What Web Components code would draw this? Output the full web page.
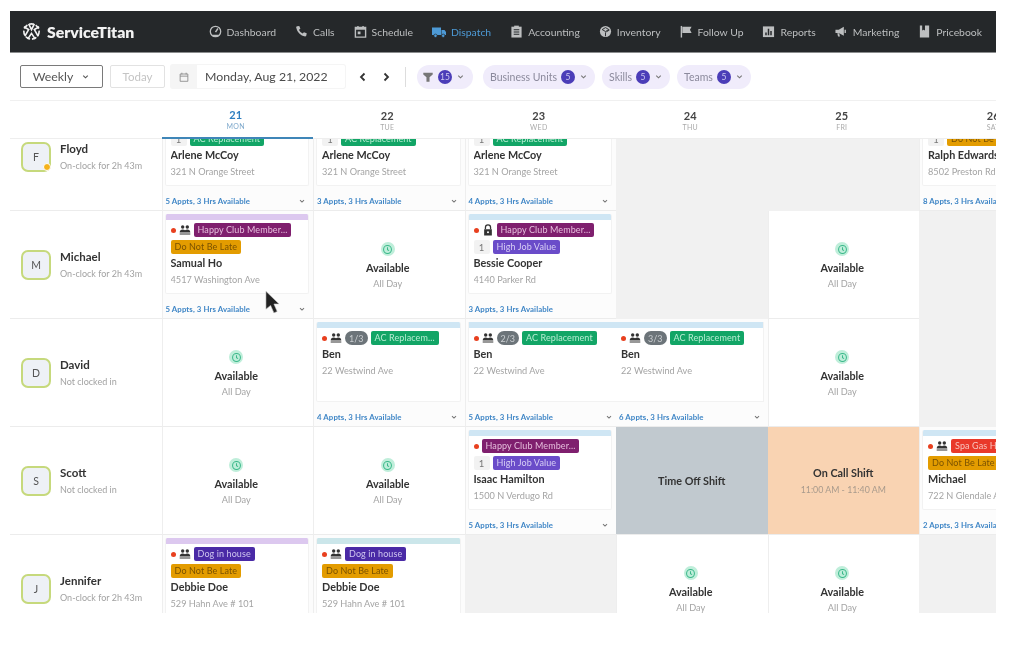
<!DOCTYPE html>
<html>
<head>
<meta charset="utf-8">
<title>ServiceTitan Dispatch</title>
<style>
    html, body { margin: 0; padding: 0; background: #fff; }
    body { font-family: 'Lato', 'Liberation Sans', sans-serif; }
</style>
</head>
<body>
<st-app>
    <st-topbar></st-topbar>
    <st-toolbar></st-toolbar>
    <st-board>
        <st-corner></st-corner>
        <st-day num="21" label="MON" active></st-day>
        <st-day num="22" label="TUE"></st-day>
        <st-day num="23" label="WED"></st-day>
        <st-day num="24" label="THU"></st-day>
        <st-day num="25" label="FRI"></st-day>
        <st-day num="26" label="SAT"></st-day>

        <st-tech initial="F" name="Floyd" status="On-clock for 2h 43m" alert></st-tech>
        <st-slot summary="5 Appts, 3 Hrs Available" active><st-job name="Arlene McCoy" addr="321 N Orange Street"><st-marks slot="one"></st-marks><st-count slot="two">1</st-count><st-tag slot="two" color="green">AC Replacement</st-tag></st-job></st-slot>
        <st-slot summary="3 Appts, 3 Hrs Available"><st-job name="Arlene McCoy" addr="321 N Orange Street"><st-marks slot="one"></st-marks><st-count slot="two">1</st-count><st-tag slot="two" color="green">AC Replacement</st-tag></st-job></st-slot>
        <st-slot summary="4 Appts, 3 Hrs Available"><st-job name="Arlene McCoy" addr="321 N Orange Street"><st-marks slot="one"></st-marks><st-count slot="two">1</st-count><st-tag slot="two" color="green">AC Replacement</st-tag></st-job></st-slot>
        <st-off></st-off>
        <st-off></st-off>
        <st-slot summary="8 Appts, 3 Hrs Available"><st-job name="Ralph Edwards" addr="8502 Preston Rd"><st-marks slot="one"></st-marks><st-count slot="two">1</st-count><st-tag slot="two" color="amber">Do Not Be Late</st-tag></st-job></st-slot>

        <st-tech initial="M" name="Michael" status="On-clock for 2h 43m"></st-tech>
        <st-slot summary="5 Appts, 3 Hrs Available"><st-job strip="#dcc8ef" name="Samual Ho" addr="4517 Washington Ave"><st-marks slot="one" icon="people"></st-marks><st-tag slot="one" color="plum">Happy Club Member...</st-tag><st-tag slot="two" color="amber">Do Not Be Late</st-tag></st-job></st-slot>
        <st-free></st-free>
        <st-slot summary="3 Appts, 3 Hrs Available" plain><st-job name="Bessie Cooper" addr="4140 Parker Rd"><st-marks slot="one" icon="lock"></st-marks><st-tag slot="one" color="plum">Happy Club Member...</st-tag><st-count slot="two">1</st-count><st-tag slot="two" color="violet">High Job Value</st-tag></st-job></st-slot>
        <st-off></st-off>
        <st-free></st-free>
        <st-off></st-off>

        <st-tech initial="D" name="David" status="Not clocked in"></st-tech>
        <st-free></st-free>
        <st-slot summary="4 Appts, 3 Hrs Available"><st-job name="Ben" addr="22 Westwind Ave"><st-marks slot="one" icon="people"></st-marks><st-count slot="one" round>1/3</st-count><st-tag slot="one" color="green">AC Replacem...</st-tag></st-job></st-slot>
        <st-slot summary="5 Appts, 3 Hrs Available" join="left"><st-job name="Ben" addr="22 Westwind Ave"><st-marks slot="one" icon="people"></st-marks><st-count slot="one" round>2/3</st-count><st-tag slot="one" color="green">AC Replacement</st-tag></st-job></st-slot>
        <st-slot summary="6 Appts, 3 Hrs Available" join="right"><st-job name="Ben" addr="22 Westwind Ave"><st-marks slot="one" icon="people"></st-marks><st-count slot="one" round>3/3</st-count><st-tag slot="one" color="green">AC Replacement</st-tag></st-job></st-slot>
        <st-free></st-free>
        <st-off></st-off>

        <st-tech initial="S" name="Scott" status="Not clocked in"></st-tech>
        <st-free></st-free>
        <st-free></st-free>
        <st-slot summary="5 Appts, 3 Hrs Available"><st-job name="Isaac Hamilton" addr="1500 N Verdugo Rd"><st-marks slot="one"></st-marks><st-tag slot="one" color="plum">Happy Club Member...</st-tag><st-count slot="two">1</st-count><st-tag slot="two" color="violet">High Job Value</st-tag></st-job></st-slot>
        <st-shift title="Time Off Shift" color="#c1c9cf"></st-shift>
        <st-shift title="On Call Shift" time="11:00 AM - 11:40 AM" color="#f9d3b2"></st-shift>
        <st-slot summary="2 Appts, 3 Hrs Available"><st-job name="Michael" addr="722 N Glendale Ave"><st-marks slot="one" icon="people"></st-marks><st-tag slot="one" color="red">Spa Gas Heater</st-tag><st-tag slot="two" color="amber">Do Not Be Late</st-tag></st-job></st-slot>

        <st-tech initial="J" name="Jennifer" status="On-clock for 2h 43m"></st-tech>
        <st-slot summary=""><st-job strip="#dcc8ef" name="Debbie Doe" addr="529 Hahn Ave # 101"><st-marks slot="one" icon="people"></st-marks><st-tag slot="one" color="indigo">Dog in house</st-tag><st-tag slot="two" color="amber">Do Not Be Late</st-tag></st-job></st-slot>
        <st-slot summary=""><st-job strip="#cbe6ea" name="Debbie Doe" addr="529 Hahn Ave # 101"><st-marks slot="one" icon="people"></st-marks><st-tag slot="one" color="indigo">Dog in house</st-tag><st-tag slot="two" color="amber">Do Not Be Late</st-tag></st-job></st-slot>
        <st-off></st-off>
        <st-free></st-free>
        <st-free></st-free>
        <st-off></st-off>
    </st-board>
    <st-pointer></st-pointer>
</st-app>

<script>
const ICONS = {
    dashboard: '<circle cx="7" cy="7" r="5.6" fill="none" stroke="currentColor" stroke-width="1.4"/><path d="M7 7.6 9.6 3.8 M3.6 11.2h6.8" fill="none" stroke="currentColor" stroke-width="1.6"/>',
    calls: '<path d="M2.2 1.4 4.6 1l1.2 3-1.5 1.2c.7 1.8 2.2 3.3 4 4l1.3-1.5 3 1.2-.4 2.5c-.1.6-.7 1-1.3.9C5.900 11.500 2.500 8.100 1.300 2.700c-.1-.6.300-1.200.9-1.300z" fill="currentColor"/>',
    schedule: '<path d="M1.500 2.500h11v10.500h-11z" fill="none" stroke="currentColor" stroke-width="1.500"/><path d="M1.500 2.500h11v2.500h-11zM3.500 1h1.500v2h-1.500zM9 1h1.500v2h-1.500zM4 7h3v3h-3z" fill="currentColor"/>',
    dispatch: '<path d="M0 2.500h9v7.500h-9zM9.500 5h3l2 2.500v2.500h-5z" fill="currentColor"/><circle cx="3.500" cy="10.800" r="1.700" fill="currentColor" stroke="#25282a" stroke-width=".7"/><circle cx="11.200" cy="10.800" r="1.700" fill="currentColor" stroke="#25282a" stroke-width=".7"/>',
    accounting: '<path d="M1.500 1.800h11v11.700h-11z" fill="currentColor"/><path d="M4.500.700h5v2.300h-5z" fill="currentColor"/><path d="M4 5h6M4 7.500h6M4 10h6" stroke="#25282a" stroke-width="1.100"/>',
    inventory: '<circle cx="7" cy="7" r="6" fill="currentColor"/><path d="M7 2.800 10.600 4.900 7 7 3.400 4.900zM7 7.900v4.200M7.900 7.400l3.400-2" fill="none" stroke="#25282a" stroke-width="1"/>',
    flag: '<path d="M1.500 1v12.500" stroke="currentColor" stroke-width="1.500"/><path d="M2.500 2h10l-1.800 3 1.800 3.500h-10z" fill="currentColor"/>',
    reports: '<path d="M1 1.500h12v11.500h-12z" fill="currentColor"/><path d="M3.500 11h1.600V8h-1.600zM6.200 11h1.600V4h-1.600zM8.900 11h1.600V6.500H8.900z" fill="#25282a"/>',
    marketing: '<path d="M.500 5h3.500l5.500-3v9.500l-5.500-3h-3.500z" fill="currentColor"/><path d="M2.500 9h2l.800 3.500h-2z" fill="currentColor"/><path d="M11 5v3.500" stroke="currentColor" stroke-width="1.500"/>',
    pricebook: '<path d="M2 .500h2.500v5.500l1.500-1 1.500 1V.500h4.500v13h-10z" fill="currentColor"/>',
    people: '<circle cx="4.300" cy="3.500" r="2" fill="currentColor"/><circle cx="9.700" cy="3.500" r="2" fill="currentColor"/><path d="M.800 10c0-2.300 1.400-3.700 3.500-3.700 1.100 0 2 .4 2.700 1.100.7-.7 1.600-1.100 2.700-1.100 2.100 0 3.500 1.400 3.500 3.700zM.800 11h12.400v1.300H.800z" fill="currentColor"/>',
    lock: '<path d="M4 6V4a3 3 0 0 1 6 0v2" fill="none" stroke="currentColor" stroke-width="1.500"/><path d="M2.500 6h9v7.500h-9z" fill="currentColor"/><circle cx="7" cy="9.600" r="1.200" fill="#fff"/>',
    chevron: '<path d="M3.500 5.500 7 9l3.500-3.500" fill="none" stroke="currentColor" stroke-width="1.800"/>',
    filter: '<path d="M1.500 2h11v2.200l-3.700 3v5.300H5.200V7.200L1.500 4.200z" fill="currentColor"/>',
    calendar: '<path d="M2.500 3.500h9v8.500h-9zM2.500 6h9M4.500 2v2M9.500 2v2" fill="none" stroke="currentColor" stroke-width="1"/>'
};

const icon = (name, size) => `<svg viewBox="0 0 14 14" width="${size}" height="${size}" aria-hidden="true">${ICONS[name]}</svg>`;

class ShadowElement extends HTMLElement {
    constructor() {
        super();
        this.attachShadow({ mode: 'open' });
    }
    connectedCallback() {
        this.shadowRoot.innerHTML = `<style>${this.getStyles()}</style>${this.getMarkup()}`;
    }
    attr(name, fallback = '') {
        return this.hasAttribute(name) ? this.getAttribute(name) : fallback;
    }
}

class App extends ShadowElement {
    getStyles() {
        return `
            :host { display: flex; flex-direction: column; position: relative; width: 986px; height: 602px; margin: 11px 0 0 10px; overflow: hidden; background: #fff; filter: blur(.6px); }
        `;
    }
    getMarkup() { return '<slot></slot>'; }
}

class Topbar extends ShadowElement {
    getStyles() {
        return `
            :host { display: flex; align-items: center; justify-content: space-between; flex: none; height: 41px; padding: 0 14px 0 11px; background: #25282a; border-bottom: 1px solid #8b8d8e; color: #bdbfc0; }
            .logo { display: flex; align-items: center; gap: 5px; color: #f2f2f2; font: 800 15.800px 'Lato', sans-serif; }
            nav { display: flex; align-items: center; gap: 19px; font-size: 10.400px; }
            a { display: flex; align-items: center; gap: 5px; }
            a.on { color: #4d9ad6; }
            svg { display: block; }
        `;
    }
    getMarkup() {
        const items = [['dashboard', 'Dashboard'], ['calls', 'Calls'], ['schedule', 'Schedule'], ['dispatch', 'Dispatch'], ['accounting', 'Accounting'], ['inventory', 'Inventory'], ['flag', 'Follow Up'], ['reports', 'Reports'], ['marketing', 'Marketing'], ['pricebook', 'Pricebook']];
        return `
            <div class="logo">
                <svg viewBox="0 0 22 22" width="21" height="21" fill="none" stroke="currentColor" stroke-width="1.700"><circle cx="11" cy="11" r="8" stroke-dasharray="5 2"/><path d="M3 6 8 9l-4 7M19 6l-5 3 4 7M8 3l3 6 3-6M7 19l4-6 4 6"/></svg>
                <span>ServiceTitan</span>
            </div>
            <nav>${items.map(([i, t]) => `<a class="${t === 'Dispatch' ? 'on' : ''}">${icon(i, i === 'dispatch' ? 14 : 13)}<span>${t}</span></a>`).join('')}</nav>
        `;
    }
}

class FilterPill extends ShadowElement {
    getStyles() {
        return `
            :host { display: flex; align-items: center; gap: 4px; height: 24px; padding: 0 7px; border-radius: 12px; background: #f0ecfb; color: #8b8a9c; font-size: 10.500px; }
            b { display: flex; align-items: center; justify-content: center; min-width: 14px; height: 14px; padding: 0 1.500px; border-radius: 7px; background: #4b3db8; color: #cfcaf0; font-size: 8.500px; font-weight: 400; box-sizing: border-box; }
            svg { display: block; color: #777; }
            .f { color: #333; }
            :host([filter]) { gap: 4px; padding: 0 8px 0 5px; margin-right: 3px; }
        `;
    }
    getMarkup() {
        const lead = this.hasAttribute('filter') ? `<span class="f">${icon('filter', 12)}</span>` : `<span>${this.attr('label')}</span>`;
        return `${lead}<b>${this.attr('count')}</b>${icon('chevron', 9)}`;
    }
}

class Toolbar extends ShadowElement {
    getStyles() {
        return `
            :host { display: flex; align-items: center; flex: none; height: 48px; padding-left: 10px; background: #fff; font-size: 12.300px; color: #555; box-sizing: border-box; border-bottom: 1px solid #f0f0f0; }
            .btn { display: flex; align-items: center; justify-content: center; box-sizing: border-box; height: 23px; border-radius: 2px; }
            .weekly { width: 83px; gap: 8px; border: 1px solid #7a7a7a; color: #555; }
            .today { width: 55px; margin-left: 7px; border: 1px solid #e2e2e2; color: #c4c4c4; font-size: 11.500px; }
            .date { display: flex; align-items: center; height: 23px; width: 174px; margin-left: 6px; border-radius: 2px; box-shadow: 0 0 0 1px #f5f5f5; color: #4a4a4a; }
            .date i { display: flex; align-items: center; justify-content: center; width: 26px; height: 100%; background: #f5f5f5; color: #888; }
            .date span { margin-left: 8px; white-space: nowrap; }
            .arrows { display: flex; gap: 13px; margin-left: 13px; }
            .arrows svg { display: block; color: #333; }
            .sep { width: 1px; height: 20px; margin: 0 11px 0 14px; background: #ddd; }
            .pills { display: flex; gap: 7px; }
            svg { display: block; }
        `;
    }
    getMarkup() {
        return `
            <div class="btn weekly"><span>Weekly</span>${icon('chevron', 9)}</div>
            <div class="btn today">Today</div>
            <div class="date"><i>${icon('calendar', 12)}</i><span>Monday, Aug 21, 2022</span></div>
            <div class="arrows">
                <svg viewBox="0 0 10 10" width="10" height="10"><path d="M6.500 1.500 3 5l3.500 3.500" fill="none" stroke="currentColor" stroke-width="1.800"/></svg>
                <svg viewBox="0 0 10 10" width="10" height="10"><path d="M3.500 1.500 7 5 3.500 8.500" fill="none" stroke="currentColor" stroke-width="1.800"/></svg>
            </div>
            <div class="sep"></div>
            <div class="pills">
                <st-pill filter count="15"></st-pill>
                <st-pill label="Business Units" count="5"></st-pill>
                <st-pill label="Skills" count="5"></st-pill>
                <st-pill label="Teams" count="5"></st-pill>
            </div>
        `;
    }
}

class Board extends ShadowElement {
    getStyles() {
        return `
            :host { display: grid; grid-template-columns: repeat(7, 151.500px); grid-template-rows: 38px 72px repeat(4, 108px); flex: none; background: #fff; }
        `;
    }
    getMarkup() { return '<slot></slot>'; }
}

class Corner extends ShadowElement {
    getStyles() { return ':host { display: block; border-bottom: 1px solid #eee; }'; }
    getMarkup() { return ''; }
}

class Day extends ShadowElement {
    getStyles() {
        return `
            :host { display: flex; flex-direction: column; align-items: center; justify-content: center; padding: 1px 3px 0 0; box-sizing: border-box; border-bottom: 1px solid #eee; color: #444; }
            :host([active]) { border-bottom: 2px solid #3f86b8; color: #2f7fc0; }
            b { font-size: 11px; line-height: 13px; font-weight: 700; }
            span { font-size: 7px; line-height: 10px; color: #aaa; letter-spacing: .3px; }
            :host([active]) span { color: #7fa9cc; }
        `;
    }
    getMarkup() { return `<b>${this.attr('num')}</b><span>${this.attr('label')}</span>`; }
}

class Tech extends ShadowElement {
    getStyles() {
        return `
            :host { display: flex; align-items: flex-end; overflow: hidden; border-bottom: 1px solid #ececec; box-sizing: border-box; background: #fff; }
            .in { display: flex; align-items: center; flex: none; gap: 9px; height: 107px; padding-left: 11px; }
            .av { position: relative; display: flex; align-items: center; justify-content: center; box-sizing: border-box; width: 30px; height: 30px; border: 2px solid #c6d97c; border-radius: 7px; background: #eef1f6; color: #555; font-size: 10.500px; }
            .dot { position: absolute; right: -2px; bottom: -1px; width: 6px; height: 6px; border-radius: 50%; background: #f5b21a; border: 1px solid #fff; }
            .name { font-size: 11.500px; font-weight: 700; line-height: 14px; color: #333; }
            .st { margin-top: 4px; font-size: 9px; line-height: 12px; color: #a2a2a2; }
        `;
    }
    getMarkup() {
        return `
            <div class="in">
                <div class="av">${this.attr('initial')}${this.hasAttribute('alert') ? '<i class="dot"></i>' : ''}</div>
                <div class="txt"><div class="name">${this.attr('name')}</div><div class="st">${this.attr('status')}</div></div>
            </div>
        `;
    }
}

class Slot extends ShadowElement {
    getStyles() {
        return `
            :host { display: flex; flex-direction: column; justify-content: flex-end; overflow: hidden; min-width: 0; box-sizing: border-box; border-left: 1px solid #eee; border-bottom: 1px solid #ececec; background: #fcfcfc; }
            .in { flex: none; height: 107px; padding: 3px 4px 0 2px; box-sizing: border-box; }
            :host([join="left"]) .in { padding-right: 0; }
            :host([join="right"]) { border-left: 0; }
            :host([join="right"]) .in { padding-left: 0; }
            .sum { display: flex; align-items: center; justify-content: space-between; height: 18px; margin-top: 6px; padding: 0 3px 0 1px; color: #3f86c6; font-size: 7.800px; font-weight: 700; white-space: nowrap; letter-spacing: .1px; }
            :host([join="right"]) .sum { padding-left: 3px; }
            svg { display: block; color: #777; flex: none; }
        `;
    }
    getMarkup() {
        const summary = this.attr('summary');
        return `
            <div class="in">
                <slot></slot>
                ${summary ? `<div class="sum"><span>${summary}</span>${this.hasAttribute('plain') ? '' : icon('chevron', 8)}</div>` : ''}
            </div>
        `;
    }
    connectedCallback() {
        super.connectedCallback();
        const join = this.attr('join');
        const job = this.querySelector('st-job');
        if (job && join) job.setAttribute('join', join);
    }
}

class Job extends ShadowElement {
    getStyles() {
        return `
            :host { display: block; height: 80px; box-sizing: border-box; overflow: hidden; border: 1px solid #f2f2f2; border-top: 0; border-radius: 2px; background: #fff; }
            :host([join="left"]) { border-right: 0; border-radius: 0; }
            :host([join="right"]) { border-left: 0; border-radius: 0; }
            .strip { height: 6px; background: var(--strip, #cfe6f4); }
            .body { padding: 3px 4px 0 5px; }
            :host([join="right"]) .body { padding-left: 5px; }
            .row { display: flex; align-items: center; gap: 3px; height: 14px; overflow: hidden; white-space: nowrap; }
            .row + .row { margin-top: 3px; }
            .row.empty { display: none; }
            .name { margin-top: 2px; font-size: 10.800px; line-height: 14px; font-weight: 700; color: #333; white-space: nowrap; overflow: hidden; }
            .addr { margin-top: 3px; font-size: 9.200px; line-height: 14px; color: #a4a4a4; white-space: nowrap; overflow: hidden; }
        `;
    }
    getMarkup() {
        const strip = this.attr('strip');
        return `
            <div class="strip" ${strip ? `style="--strip:${strip}"` : ''}></div>
            <div class="body">
                <div class="row"><slot name="one"></slot></div>
                <div class="row ${this.querySelector('[slot="two"]') ? '' : 'empty'}"><slot name="two"></slot></div>
                <div class="name">${this.attr('name')}</div>
                <div class="addr">${this.attr('addr')}</div>
            </div>
        `;
    }
}

class Marks extends ShadowElement {
    getStyles() {
        return `
            :host { display: flex; align-items: center; gap: 3px; flex: none; color: #333; }
            i { display: block; width: 5px; height: 5px; border-radius: 50%; background: #e8401f; }
            svg { display: block; }
        `;
    }
    getMarkup() {
        const name = this.attr('icon');
        return `<i></i>${name ? icon(name, 12) : ''}`;
    }
}

class Count extends ShadowElement {
    getStyles() {
        return `
            :host { display: flex; align-items: center; justify-content: center; flex: none; height: 14px; min-width: 14px; padding: 0 1px; background: #f2f2f2; color: #777; font-size: 9.500px; border-radius: 2px; }
            :host([round]) { padding: 0 4px; border-radius: 7px; background: #6c7479; color: #c9cdd0; font-size: 9px; min-width: 14px; }
        `;
    }
    getMarkup() { return '<slot></slot>'; }
}

class Tag extends ShadowElement {
    getStyles() {
        const colors = { green: ['#12a566', '#b7ecd2'], amber: ['#e39c00', '#7a5200'], plum: ['#7f1f6e', '#e6bfdd'], violet: ['#6a4cc9', '#d8cff5'], indigo: ['#4a2aa6', '#cfc6ef'], red: ['#e9392a', '#f8c5bf'] };
        const [bg, fg] = colors[this.attr('color', 'green')];
        return `
            :host { display: block; flex: none; height: 14px; padding: 0 4px; border-radius: 2px; background: ${bg}; color: ${fg}; font-size: 9px; line-height: 14px; white-space: nowrap; letter-spacing: .1px; }
        `;
    }
    getMarkup() { return '<slot></slot>'; }
}

class Free extends ShadowElement {
    getStyles() {
        return `
            :host { display: flex; flex-direction: column; align-items: center; box-sizing: border-box; padding: 31px 3px 0 0; height: 108px; border-left: 1px solid #eee; border-bottom: 1px solid #ececec; background: #fff; }
            .ic { display: flex; align-items: center; justify-content: center; width: 14px; height: 14px; border-radius: 50%; background: #bfeeda; color: #3bb88a; }
            svg { display: block; }
            b { margin-top: 5px; font-size: 10.800px; line-height: 14px; color: #333; }
            span { margin-top: 3px; font-size: 9.200px; line-height: 12px; color: #a4a4a4; }
        `;
    }
    getMarkup() {
        return `
            <div class="ic"><svg viewBox="0 0 14 14" width="11" height="11" fill="none" stroke="currentColor" stroke-width="1.300"><circle cx="7" cy="7" r="5"/><path d="M7 4v3.300l2 1.200"/></svg></div>
            <b>Available</b>
            <span>All Day</span>
        `;
    }
}

class Off extends ShadowElement {
    getStyles() { return ':host { display: block; background: #f1f1f1; }'; }
    getMarkup() { return ''; }
}

class Shift extends ShadowElement {
    getStyles() {
        return `
            :host { display: flex; flex-direction: column; align-items: center; justify-content: center; background: ${this.attr('color')}; box-sizing: border-box; padding-top: 1px; border-bottom: 1px solid #ececec; }
            b { font-size: 10.800px; line-height: 14px; color: #333; }
            span { margin-top: 4px; font-size: 8.800px; line-height: 12px; color: #a89a8c; }
        `;
    }
    getMarkup() {
        const time = this.attr('time');
        return `<b>${this.attr('title')}</b>${time ? `<span>${time}</span>` : ''}`;
    }
}

// the mouse cursor caught in the capture, lying over the Michael row
class Pointer extends ShadowElement {
    getStyles() { return ':host { position: absolute; left: 255px; top: 279px; width: 15px; height: 27px; }'; }
    getMarkup() {
        return `<svg viewBox="0 0 16 28" width="15" height="27"><path d="M1 1v19l5-4 3.500 8 3.500-1.500-3.500-8H15z" fill="#222" stroke="#ccc" stroke-width=".6"/></svg>`;
    }
}

customElements.define('st-app', App);
customElements.define('st-topbar', Topbar);
customElements.define('st-pill', FilterPill);
customElements.define('st-toolbar', Toolbar);
customElements.define('st-board', Board);
customElements.define('st-corner', Corner);
customElements.define('st-day', Day);
customElements.define('st-tech', Tech);
customElements.define('st-job', Job);
customElements.define('st-slot', Slot);
customElements.define('st-marks', Marks);
customElements.define('st-count', Count);
customElements.define('st-tag', Tag);
customElements.define('st-free', Free);
customElements.define('st-off', Off);
customElements.define('st-shift', Shift);
customElements.define('st-pointer', Pointer);
</script>
</body>
</html>
